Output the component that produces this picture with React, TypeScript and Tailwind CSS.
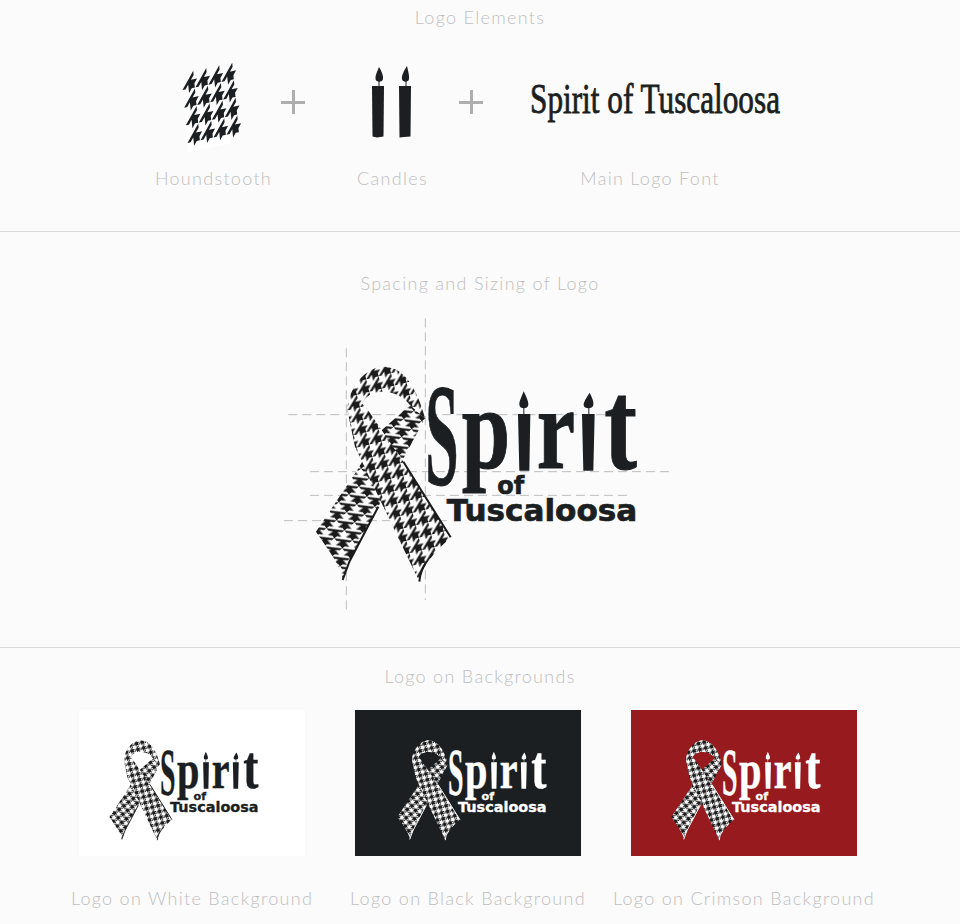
import type { ReactNode } from "react";

const tooth = "M4 4L8 0V2L6 4H10L8 6V8H6L4 10V8H4V6L2 8H0Z";
const tile = "M4 4H8V8H4Z M4 4L8 0V2L6 4Z M4 0H6L4 2Z M0 8L4 4V6L2 8Z M0 4H2L0 6Z";

const Logo = ({ id, ink, edge, className, children }: { id: string; ink: string; edge: string; className: string; children?: ReactNode }) => (
  <svg viewBox="0 0 1260 930" className={className}>
    <defs>
      <pattern id={`${id}-a`} width="8" height="8" patternUnits="userSpaceOnUse" patternTransform="translate(3 5) rotate(52) scale(4.8)">
        <rect width="8" height="8" fill="#fff" />
        <path d={tile} fill="#1b1b1b" />
      </pattern>
      <pattern id={`${id}-b`} width="8" height="8" patternUnits="userSpaceOnUse" patternTransform="translate(0 3) rotate(-14) scale(4.8)">
        <rect width="8" height="8" fill="#fff" />
        <path d={tile} fill="#1b1b1b" />
      </pattern>
    </defs>
    {children}
    <path d="M138 665L262 480L330 365L420 285L465 325L395 455L325 590L238 755L218 810C218 775 175 720 138 665Z" fill={`url(#${id}-a)`} />
    <path
      d="M232 300C235 230 290 170 340 170C400 170 440 230 465 325L420 285C400 258 370 245 335 245C310 245 285 260 275 280L290 295L400 455L542 682C490 730 455 770 448 815L340 590L255 410Z"
      fill={`url(#${id}-b)`}
    />
    <path d="M218 810L238 755L325 590M400 455L542 682M448 815C450 790 455 775 470 755" fill="none" stroke={edge} strokeWidth="6" />
    <text fill={ink} stroke={ink} strokeWidth="3" fontFamily="Liberation Serif" fontWeight="700">
      <tspan x="466" y="525" fontSize="440" textLength="100" lengthAdjust="spacingAndGlyphs">S</tspan>
      <tspan x="575" y="475" fontSize="350" textLength="145" lengthAdjust="spacingAndGlyphs">p</tspan>
      <tspan x="745" y="475" fontSize="350" fill="transparent" stroke="transparent">i</tspan>
      <tspan x="800" y="475" fontSize="350" textLength="115" lengthAdjust="spacingAndGlyphs">r</tspan>
      <tspan x="935" y="475" fontSize="350" fill="transparent" stroke="transparent">i</tspan>
      <tspan x="1003" y="478" fontSize="390" textLength="98" lengthAdjust="spacingAndGlyphs">t</tspan>
    </text>
    <g fill={ink}>
      <path d="M744 312H781L778 482H748Z" />
      <path d="M761 244C770 262 776 276 775 284C774 298 749 298 748 284C747 276 754 262 761 244Z" />
      <path d="M760 294H763V312H760Z" />
      <path d="M936 312H974L970 482H940Z" />
      <path d="M959 248C967 264 972 276 970 286C968 298 942 298 941 286C940 276 950 262 959 248Z" />
      <path d="M955 294H958V312H955Z" />
    </g>
    <text x="682" y="553" fill={ink} stroke={ink} strokeWidth="2" fontFamily="DejaVu Sans" fontWeight="700" fontSize="72">of</text>
    <text x="530" y="632" fill={ink} stroke={ink} strokeWidth="2" fontFamily="DejaVu Sans" fontWeight="700" fontSize="88" textLength="572" lengthAdjust="spacingAndGlyphs">Tuscaloosa</text>
  </svg>
);

const Caption = ({ children, className = "" }: { children: string; className?: string }) => (
  <p className={`font-['Lato',sans-serif] font-light text-[18px] leading-[22px] tracking-[1.3px] text-[#bfbfbf] text-center whitespace-nowrap ${className}`}>{children}</p>
);

const Plus = () => (
  <div className="h-[84px] flex items-center">
    <span className="relative block w-[24px] h-[3px] bg-[#aeaeae]">
      <span className="absolute left-[10.5px] top-[-10.5px] block w-[3px] h-[24px] bg-[#aeaeae]" />
    </span>
  </div>
);

const rows = [0, 1, 2, 3];

const Houndstooth = () => (
  <svg viewBox="0 0 70 84" className="w-[70px] h-[84px] overflow-visible">
    <g transform="matrix(1.625 -0.34 0.21 2.2 1.500 13)">
      <path d="M0 16H26V36H0Z" fill="#fff" />
      {rows.map((r) =>
        rows.map((c) => <path key={`${r}-${c}`} d={tooth} transform={`translate(${c * 8 + 0.2} ${r * 8 + 0.2}) scale(0.95)`} fill="#1b1f22" />),
      )}
    </g>
  </svg>
);

const Candles = () => (
  <svg viewBox="0 0 71 84" className="w-[71px] h-[84px]" fill="#1b1f22">
    <path d="M15 26H27L26.500 76.500L20 77.500L15.500 76.500Z" />
    <path d="M22 7C25 12 26.500 16 26 19C25.500 22.500 19 22.500 18.500 19C18 16 20 12 22 7Z" />
    <path d="M21.500 21H22.500V26H21.500Z" />
    <path d="M42 26H54L53.500 76.500L47 77L42.500 77.500Z" />
    <path d="M50 6C51 11 52.500 15 52 19C51.500 22.500 45.500 22.500 45 19C44.500 15 47 11 50 6Z" />
    <path d="M48.500 21H49.500V26H48.500Z" />
  </svg>
);

const cards = [
  { id: "white", caption: "Logo on White Background", card: "bg-white pl-[9px]", ink: "#1b1f22", edge: "#1b1b1b" },
  { id: "black", caption: "Logo on Black Background", card: "bg-[#1b1f22] pl-[21px]", ink: "#ffffff", edge: "#ffffff" },
  { id: "crimson", caption: "Logo on Crimson Background", card: "bg-[#971a1e] pl-[19px]", ink: "#ffffff", edge: "#ffffff" },
];

export default function App() {
  return (
    <div className="w-[960px] h-[924px] bg-[#fbfbfb] overflow-hidden">
      <section className="h-[232px] border-b border-[#d9d9d9] pt-[6px]">
        <Caption>Logo Elements</Caption>
        <div className="flex pl-[157px] mt-[32px]">
          <div className="w-[113px] flex flex-col items-center gap-[23px]">
            <Houndstooth />
            <Caption>Houndstooth</Caption>
          </div>
          <div className="ml-[11px]"><Plus /></div>
          <div className="ml-[52px] w-[71px] flex flex-col items-center gap-[23px]">
            <Candles />
            <Caption>Candles</Caption>
          </div>
          <div className="ml-[31px]"><Plus /></div>
          <div className="ml-[47px] w-[250px] flex flex-col items-center gap-[23px]">
            <svg viewBox="0 0 250 84" className="w-[250px] h-[84px] overflow-visible">
              <text x="0" y="53" fill="#1b1f22" stroke="#1b1f22" strokeWidth="0.8" fontFamily="Liberation Serif" fontSize="42" textLength="250" lengthAdjust="spacingAndGlyphs">Spirit of Tuscaloosa</text>
            </svg>
            <Caption className="mr-[10px]">Main Logo Font</Caption>
          </div>
        </div>
      </section>

      <section className="h-[416px] border-b border-[#d9d9d9] pt-[40px] flex flex-col items-center">
        <Caption>Spacing and Sizing of Logo</Caption>
        <Logo id="main" ink="#1b1f22" edge="#1b1b1b" className="w-[420px] h-[310px] mt-[16px]">
          <path
            d="M229 115V905M466 25V870M55 314H1085M120 485H1210M120 556H1085M42 632H540"
            fill="none"
            stroke="#bdbdbd"
            strokeWidth="3"
            strokeDasharray="27 15"
          />
        </Logo>
      </section>

      <section className="pt-[17px]">
        <Caption>Logo on Backgrounds</Caption>
        <div className="flex gap-[50px] pl-[79px] mt-[23px]">
          {cards.map((c) => (
            <div key={c.id} className="w-[226px] flex flex-col items-center gap-[31px]">
              <div className={`w-[226px] h-[146px] pt-[4px] ${c.card}`}>
                <Logo id={c.id} ink={c.ink} edge={c.edge} className="w-[195px] h-[144px]" />
              </div>
              <Caption>{c.caption}</Caption>
            </div>
          ))}
        </div>
      </section>
    </div>
  );
}
